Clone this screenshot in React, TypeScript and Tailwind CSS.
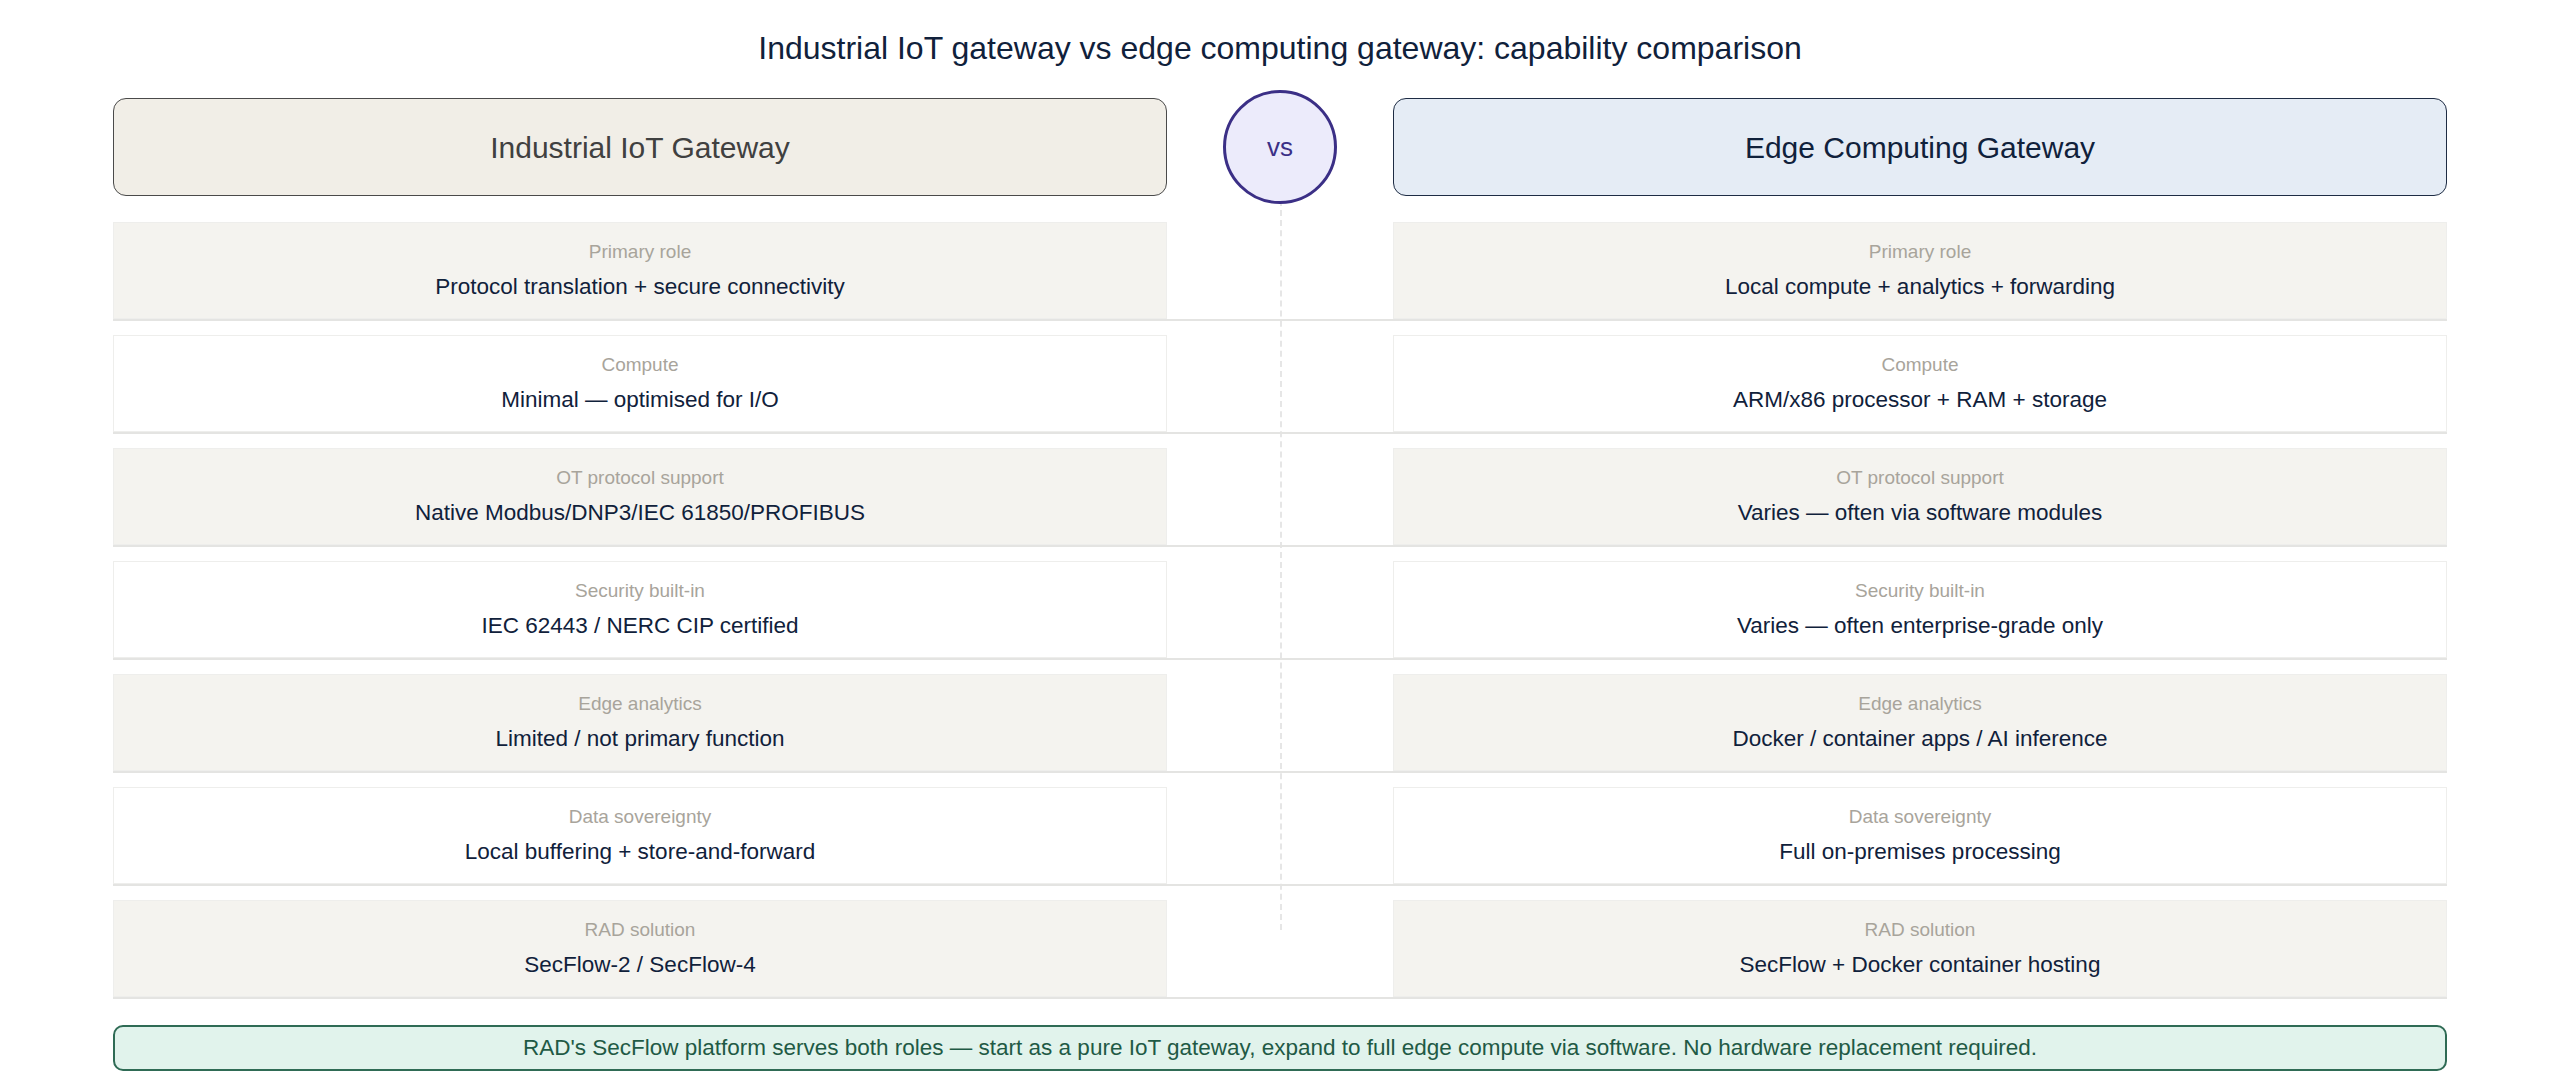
import React from "react";

const rows = [
  ["Primary role", "Protocol translation + secure connectivity", "Local compute + analytics + forwarding"],
  ["Compute", "Minimal — optimised for I/O", "ARM/x86 processor + RAM + storage"],
  ["OT protocol support", "Native Modbus/DNP3/IEC 61850/PROFIBUS", "Varies — often via software modules"],
  ["Security built-in", "IEC 62443 / NERC CIP certified", "Varies — often enterprise-grade only"],
  ["Edge analytics", "Limited / not primary function", "Docker / container apps / AI inference"],
  ["Data sovereignty", "Local buffering + store-and-forward", "Full on-premises processing"],
  ["RAD solution", "SecFlow-2 / SecFlow-4", "SecFlow + Docker container hosting"],
];

function Cell({ label, value, shaded }: { label: string; value: string; shaded: boolean }) {
  return (
    <div className={`flex-1 flex flex-col items-center justify-center border border-[#eeeeec] ${shaded ? "bg-[#f4f3ef]" : "bg-white"}`}>
      <div className="text-[19px] text-[#a8a49b] leading-none">{label}</div>
      <div className="text-[22.5px] text-[#10213b] leading-none mt-[15px]">{value}</div>
    </div>
  );
}

export default function App() {
  return (
    <div className="w-[2560px] h-[1092px] bg-white px-[113px] flex flex-col" style={{ fontFamily: '"Liberation Sans", Arial, sans-serif' }}>
      <div className="text-center text-[32px] text-[#10213b] pt-[32px] leading-none h-[90px]">
        Industrial IoT gateway vs edge computing gateway: capability comparison
      </div>
      <div className="relative flex flex-col">
        <div className="absolute left-1/2 top-[110px] h-[730px] border-l-2 border-dashed border-[#e6e6e6]" />
        <div className="flex items-center gap-[56px] mt-[0px]">
          <div className="flex-1 h-[98px] rounded-[13px] border-[1.5px] border-[#4a4a4a] bg-[#f1eee7] flex items-center justify-center text-[30px] text-[#404040]">
            Industrial IoT Gateway
          </div>
          <div className="w-[114px] h-[114px] rounded-full border-[3px] border-[#3b2f86] bg-[#ecebfb] flex items-center justify-center text-[26px] text-[#3b2f86] relative">
            vs
          </div>
          <div className="flex-1 h-[98px] rounded-[13px] border-[1.5px] border-[#1e2c44] bg-[#e5ecf5] flex items-center justify-center text-[30px] text-[#10213b]">
            Edge Computing Gateway
          </div>
        </div>
        <div className="flex flex-col gap-[14px] mt-[18px] relative">
          {rows.map((r, i) => (
            <div key={i} className="flex gap-[56px] h-[99px] border-b-2 border-[#e4e4e2] relative">
              <Cell label={r[0]} value={r[1]} shaded={i % 2 === 0} />
              <div className="w-[114px]" />
              <Cell label={r[0]} value={r[2]} shaded={i % 2 === 0} />
            </div>
          ))}
        </div>
      </div>
      <div className="mt-[26px] h-[46px] rounded-[10px] border-2 border-[#2f6b55] bg-[#e1f3ec] flex items-center justify-center text-[22.5px] text-[#1f5a45]">
        RAD's SecFlow platform serves both roles — start as a pure IoT gateway, expand to full edge compute via software. No hardware replacement required.
      </div>
    </div>
  );
}
